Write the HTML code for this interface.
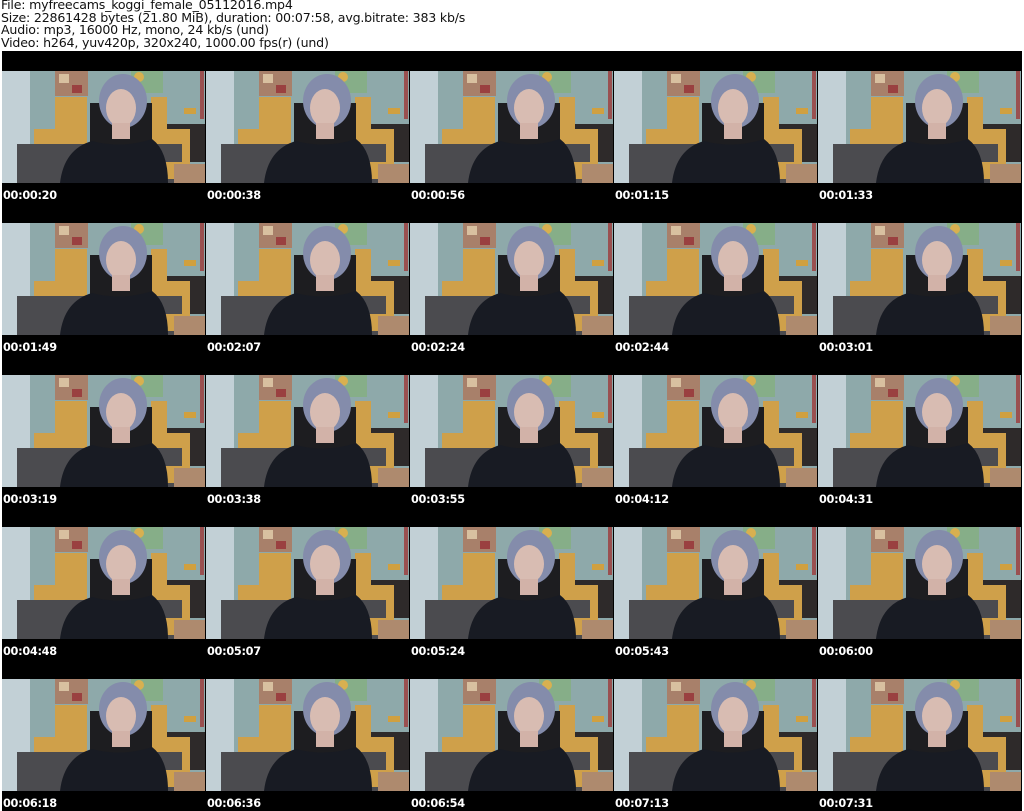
<!DOCTYPE html>
<html><head><meta charset="utf-8"><style>
body{margin:0;width:1024px;height:811px;background:#fff;position:relative;overflow:hidden;font-family:"DejaVu Sans","Liberation Sans",sans-serif}
.h{position:absolute;left:1px;top:-1px;font-size:12.6px;line-height:12.7px;color:#111;white-space:pre;letter-spacing:-0.2px}
.bk{position:absolute;left:2px;top:51px;width:1020px;height:760px;background:#000}
svg{position:absolute;left:2px;top:51px}
.t{position:absolute;color:#fff;font-weight:bold;font-size:11.3px;line-height:12px;letter-spacing:-0.3px}
</style></head><body>
<div class="h">File: myfreecams_koggi_female_05112016.mp4
Size: 22861428 bytes (21.80 MiB), duration: 00:07:58, avg.bitrate: 383 kb/s
Audio: mp3, 16000 Hz, mono, 24 kb/s (und)
Video: h264, yuv420p, 320x240, 1000.00 fps(r) (und)</div>
<div class="bk"></div>
<svg width="1020" height="760" viewBox="0 0 1020 760">
<defs><symbol id="s" viewBox="0 0 203 112" preserveAspectRatio="none">
<rect width="203" height="112" fill="#8ea9aa"/>
<rect width="28" height="112" fill="#c2d0d6"/>
<rect x="53" y="0" width="33" height="25" fill="#a8806a"/>
<rect x="57" y="3" width="10" height="9" fill="#d8c0a0"/>
<rect x="70" y="14" width="10" height="8" fill="#9a4040"/>
<rect x="129" y="0" width="32" height="22" fill="#86ae88"/>
<circle cx="137" cy="6" r="5" fill="#d8b050"/>
<rect x="198" y="0" width="4" height="48" fill="#9a5050"/>
<rect x="53" y="26" width="32" height="47" fill="#cfa04a"/>
<rect x="149" y="26" width="16" height="47" fill="#cfa04a"/>
<rect x="165" y="53" width="38" height="38" fill="#2e2a2a"/>
<rect x="182" y="37" width="12" height="6" fill="#d0a040"/>
<rect x="32" y="58" width="22" height="40" fill="#cfa04a"/>
<rect x="15" y="73" width="160" height="39" fill="#4b4b4f"/>
<rect x="152" y="58" width="36" height="50" fill="#cfa04a"/>
<rect x="152" y="73" width="28" height="18" fill="#4b4b4f"/>
<rect x="172" y="93" width="31" height="19" fill="#ae8a6e"/>
<rect x="88" y="32" width="62" height="80" fill="#1d1d20"/>
<ellipse cx="121" cy="30" rx="24" ry="27" fill="#848cab"/>
<ellipse cx="119" cy="37" rx="15" ry="19" fill="#d8bcb2"/>
<rect x="110" y="52" width="18" height="16" fill="#d2b2a8"/>
<path d="M58 112 Q62 78 90 70 Q120 78 150 68 Q166 80 166 112Z" fill="#181b23"/>
</symbol></defs>
<g>
<use href="#s" x="0" y="20" width="203" height="112"/><use href="#s" x="204" y="20" width="203" height="112"/><use href="#s" x="408" y="20" width="203" height="112"/><use href="#s" x="612" y="20" width="203" height="112"/><use href="#s" x="816" y="20" width="203" height="112"/>
<use href="#s" x="0" y="172" width="203" height="112"/><use href="#s" x="204" y="172" width="203" height="112"/><use href="#s" x="408" y="172" width="203" height="112"/><use href="#s" x="612" y="172" width="203" height="112"/><use href="#s" x="816" y="172" width="203" height="112"/>
<use href="#s" x="0" y="324" width="203" height="112"/><use href="#s" x="204" y="324" width="203" height="112"/><use href="#s" x="408" y="324" width="203" height="112"/><use href="#s" x="612" y="324" width="203" height="112"/><use href="#s" x="816" y="324" width="203" height="112"/>
<use href="#s" x="0" y="476" width="203" height="112"/><use href="#s" x="204" y="476" width="203" height="112"/><use href="#s" x="408" y="476" width="203" height="112"/><use href="#s" x="612" y="476" width="203" height="112"/><use href="#s" x="816" y="476" width="203" height="112"/>
<use href="#s" x="0" y="628" width="203" height="112"/><use href="#s" x="204" y="628" width="203" height="112"/><use href="#s" x="408" y="628" width="203" height="112"/><use href="#s" x="612" y="628" width="203" height="112"/><use href="#s" x="816" y="628" width="203" height="112"/>
</g></svg>
<div class="t" style="left:3px;top:190px">00:00:20</div><div class="t" style="left:207px;top:190px">00:00:38</div><div class="t" style="left:411px;top:190px">00:00:56</div><div class="t" style="left:615px;top:190px">00:01:15</div><div class="t" style="left:819px;top:190px">00:01:33</div>
<div class="t" style="left:3px;top:342px">00:01:49</div><div class="t" style="left:207px;top:342px">00:02:07</div><div class="t" style="left:411px;top:342px">00:02:24</div><div class="t" style="left:615px;top:342px">00:02:44</div><div class="t" style="left:819px;top:342px">00:03:01</div>
<div class="t" style="left:3px;top:494px">00:03:19</div><div class="t" style="left:207px;top:494px">00:03:38</div><div class="t" style="left:411px;top:494px">00:03:55</div><div class="t" style="left:615px;top:494px">00:04:12</div><div class="t" style="left:819px;top:494px">00:04:31</div>
<div class="t" style="left:3px;top:646px">00:04:48</div><div class="t" style="left:207px;top:646px">00:05:07</div><div class="t" style="left:411px;top:646px">00:05:24</div><div class="t" style="left:615px;top:646px">00:05:43</div><div class="t" style="left:819px;top:646px">00:06:00</div>
<div class="t" style="left:3px;top:798px">00:06:18</div><div class="t" style="left:207px;top:798px">00:06:36</div><div class="t" style="left:411px;top:798px">00:06:54</div><div class="t" style="left:615px;top:798px">00:07:13</div><div class="t" style="left:819px;top:798px">00:07:31</div>
</body></html>
